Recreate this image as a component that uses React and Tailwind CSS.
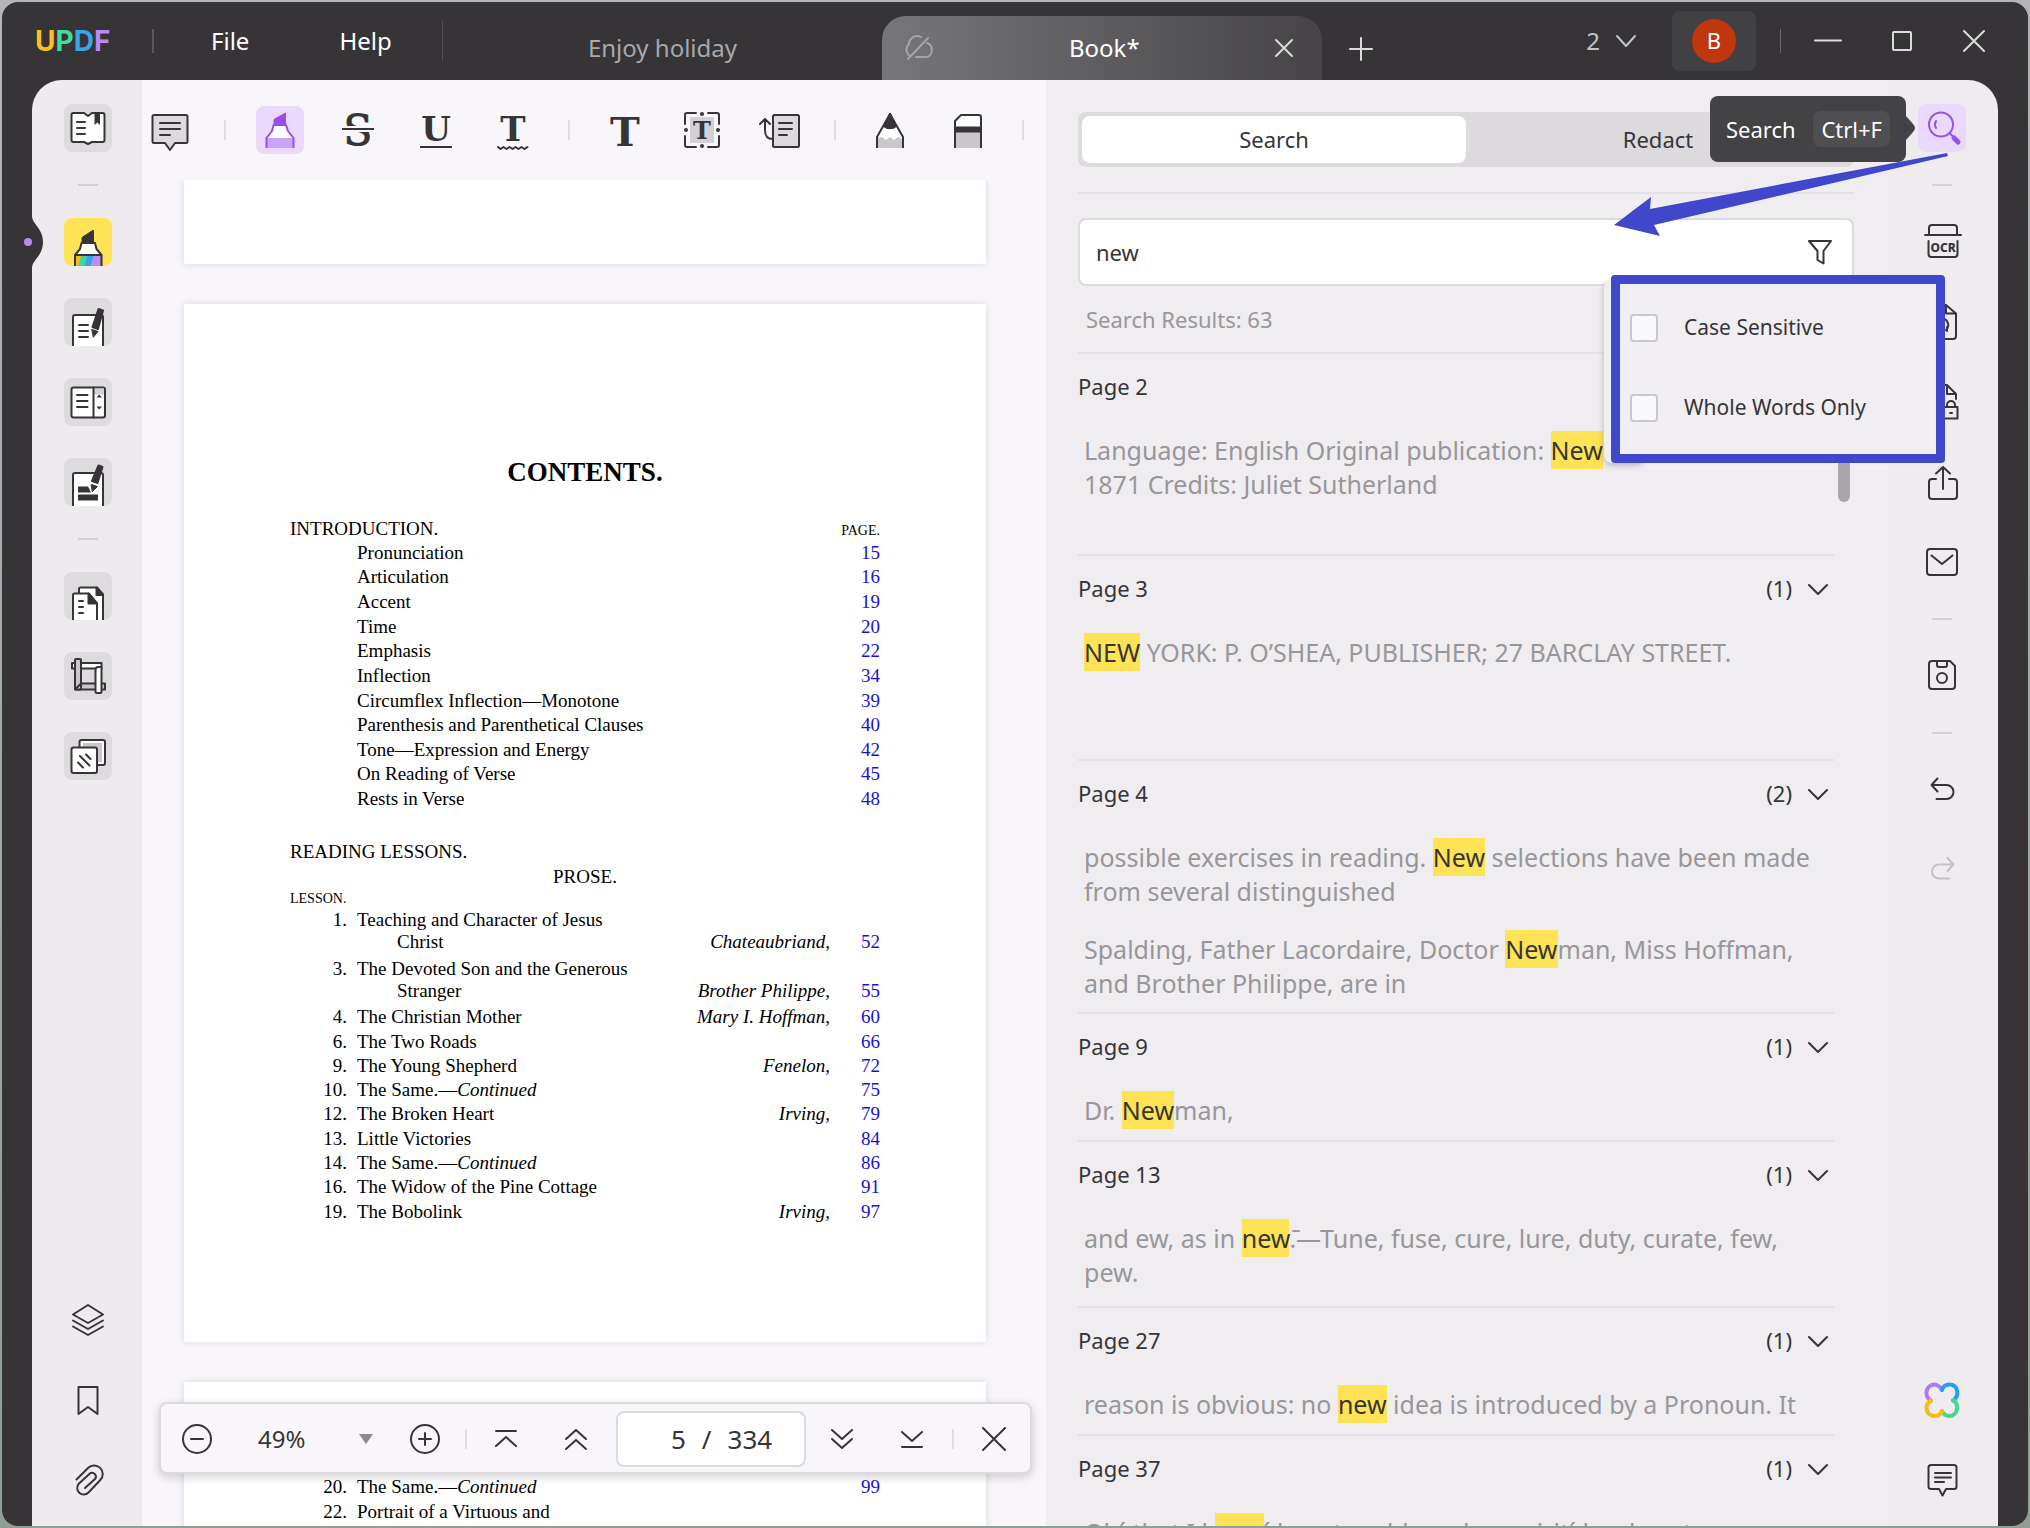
import React, { useState } from "react";

const INTRO_ROWS = [
  ["Pronunciation", 15],
  ["Articulation", 16],
  ["Accent", 19],
  ["Time", 20],
  ["Emphasis", 22],
  ["Inflection", 34],
  ["Circumflex Inflection—Monotone", 39],
  ["Parenthesis and Parenthetical Clauses", 40],
  ["Tone—Expression and Energy", 42],
  ["On Reading of Verse", 45],
  ["Rests in Verse", 48],
];

const LESSONS = [
  { no: 1, title: "Teaching and Character of Jesus", more: "Christ", author: "Chateaubriand", page: 52 },
  { no: 3, title: "The Devoted Son and the Generous", more: "Stranger", author: "Brother Philippe", page: 55 },
  { no: 4, title: "The Christian Mother", author: "Mary I. Hoffman", page: 60 },
  { no: 6, title: "The Two Roads", page: 66 },
  { no: 9, title: "The Young Shepherd", author: "Fenelon", page: 72 },
  { no: 10, title: "The Same.—", continued: true, page: 75 },
  { no: 12, title: "The Broken Heart", author: "Irving", page: 79 },
  { no: 13, title: "Little Victories", page: 84 },
  { no: 14, title: "The Same.—", continued: true, page: 86 },
  { no: 16, title: "The Widow of the Pine Cottage", page: 91 },
  { no: 19, title: "The Bobolink", author: "Irving", page: 97 },
];

const NEXT_LESSONS = [
  { no: 20, title: "The Same.—", continued: true, page: 99 },
  { no: 22, title: "Portrait of a Virtuous and" },
];

// each hit is [before, match, after, second line]
const RESULTS = [
  { page: 2, space: "pb-[53px]", hits: [["Language: English Original publication: ", "New", "", "1871 Credits: Juliet Sutherland"]] },
  { page: 3, count: 1, space: "pb-[90px]", hits: [["", "NEW", " YORK: P. O’SHEA, PUBLISHER; 27 BARCLAY STREET."]] },
  {
    page: 4,
    count: 2,
    space: "pb-3",
    hits: [
      ["possible exercises in reading. ", "New", " selections have been made", "from several distinguished"],
      ["Spalding, Father Lacordaire, Doctor ", "New", "man, Miss Hoffman,", "and Brother Philippe, are in"],
    ],
  },
  { page: 9, count: 1, space: "pb-[13px]", hits: [["Dr. ", "New", "man,"]] },
  { page: 13, count: 1, space: "pb-[17px]", hits: [["and ew, as in ", "new", ".̄—Tune, fuse, cure, lure, duty, curate, few,", "pew."]] },
  { page: 27, count: 1, space: "pb-[13px]", hits: [["reason is obvious: no ", "new", " idea is introduced by a Pronoun. It"]] },
  { page: 37, count: 1, space: "pb-[13px]", hits: [["Oh´ that I k", "new", "´ how to address her spirit´ her heart"]] },
];

function Icon({ children, className = "h-12 w-12", box = "0 0 48 48", width = 2 }) {
  return (
    <svg
      viewBox={box}
      className={`shrink-0 ${className}`}
      fill="none"
      stroke="#363437"
      strokeWidth={width}
      strokeLinecap="round"
      strokeLinejoin="round"
      aria-hidden="true"
    >
      {children}
    </svg>
  );
}

const LETTER = { fontFamily: "DejaVu Serif", fontWeight: 700, fill: "#363437", stroke: "none", textAnchor: "middle" };

const CommentIcon = ({ fill = "#dcdadd" }) => (
  <Icon>
    <path d="M8 9h32a1.5 1.5 0 0 1 1.5 1.5v25A1.5 1.5 0 0 1 40 37H29l-5 7-5-7H8a1.5 1.5 0 0 1-1.5-1.5v-25A1.5 1.5 0 0 1 8 9z" fill={fill} />
    <path d="M14 17h20M14 23h20M14 29h10" />
  </Icon>
);

const HighlighterIcon = () => (
  <Icon>
    <path d="M18 18v-4.500L29.500 7v11z" fill="#9450e6" stroke="#9450e6" strokeWidth="1" />
    <path d="M17.500 19h12.500l2 6 5.500 7H10.500l5.500-7z" fill="#fff" stroke="none" />
    <path d="M10.500 32h27v10h-27z" fill="#c9a5fa" stroke="none" />
    <path d="M10.500 42V32l5.500-7 1.500-6h12.500l2 6 5.500 7v10" stroke="#9450e6" strokeLinecap="butt" />
  </Icon>
);

const StrikeIcon = () => (
  <Icon>
    <text x="24" y="39" fontSize="42" {...LETTER} fontWeight="400" strokeWidth="1" stroke="#363437">S</text>
    <path d="M6 23h36" stroke="#f8f6fa" strokeWidth="6" strokeLinecap="butt" />
    <path d="M8 23h32" strokeLinecap="butt" />
  </Icon>
);

const UnderlineIcon = () => (
  <Icon>
    <text x="24" y="35" fontSize="34" {...LETTER}>U</text>
    <path d="M8 41h32" strokeLinecap="butt" />
  </Icon>
);

const SquigglyIcon = () => (
  <Icon>
    <text x="23" y="35" fontSize="34" {...LETTER}>T</text>
    <path d="M8 41l2.500 2 3-2 3 2 3-2 3 2 3-2 3 2 3-2 3 2 3-2" />
  </Icon>
);

const TextIcon = () => (
  <Icon>
    <text x="25" y="40" fontSize="40" {...LETTER}>T</text>
  </Icon>
);

const TextBoxIcon = () => (
  <Icon>
    <path d="M12 11h24v26H12z" fill="#d3d1d4" stroke="none" />
    <text x="24" y="33" fontSize="24" {...LETTER}>T</text>
    <path d="M18 7H9a2 2 0 0 0-2 2v9M30 7h9a2 2 0 0 1 2 2v9M18 41H9a2 2 0 0 1-2-2v-9M30 41h9a2 2 0 0 0 2-2v-9" />
    <g fill="#363437" stroke="none">
      <circle cx="24" cy="8" r="2" />
      <circle cx="24" cy="40" r="2" />
      <circle cx="8" cy="24" r="2" />
      <circle cx="40" cy="24" r="2" />
    </g>
  </Icon>
);

const CalloutIcon = () => (
  <Icon>
    <rect x="17" y="9" width="26" height="32" rx="1.500" fill="#dcdadd" />
    <path d="M23 17h13M23 23h13M23 29h8M17 33c-6 0-8-3-8-9V13M4 18l5-5 5 5" />
  </Icon>
);

const PencilIcon = () => (
  <Icon>
    <path d="M11 42V31L24 8l13 23v11" fill="#fff" stroke="none" />
    <path d="M12 42V32l4-1 4 3 4-3 4 3 4-3 4 2v9z" fill="#c9c7ca" stroke="none" />
    <path d="M11 42V31L24 8l13 23v11" strokeLinecap="butt" />
    <path d="M18 20l6-12 6 12c-3 3-9 3-12 0z" fill="#363437" />
  </Icon>
);

const EraserIcon = () => (
  <Icon>
    <path d="M11 42V15l6-6h18a2 2 0 0 1 2 2v31" fill="#fff" stroke="none" />
    <path d="M11 24h26v18H11z" fill="#c9c7ca" stroke="none" />
    <path d="M11 20.500h26v6H11z" fill="#363437" stroke="none" />
    <path d="M11 42V15l6-6h18a2 2 0 0 1 2 2v31" strokeLinecap="butt" />
  </Icon>
);

const ReaderIcon = () => (
  <Icon>
    <path d="M9.500 9H20l4 3 4-3h10.500A2 2 0 0 1 40.500 11v25a2 2 0 0 1-2 2H28l-4 2-4-2H9.500a2 2 0 0 1-2-2V11a2 2 0 0 1 2-2z" fill="#fff" />
    <path d="M30.500 9H36v12l-2.700-2.500L30.500 21z" fill="#363437" stroke="none" />
    <path d="M13 18h8M13 24h8M13 30h8" />
  </Icon>
);

const MarkerIcon = () => (
  <Icon>
    <path d="M18 24v-4.500L28.500 12.500h1V24z" fill="#363437" strokeWidth="1" />
    <path d="M17.500 25h13.500l1.500 5 5 7H11l5-7z" fill="#fff" stroke="none" />
    <path d="M11 38h6l-3 10h-3z" fill="#f9b916" stroke="none" />
    <path d="M17 38h6l-3 10h-6z" fill="#3fd797" stroke="none" />
    <path d="M23 38h7l-3 10h-7z" fill="#36a3ea" stroke="none" />
    <path d="M30 38h7.500v10H27z" fill="#bb8bf6" stroke="none" />
    <path d="M11 48V37l5-6 1.500-6H31l1.500 6 5 6v11M11 37h26.500" strokeLinecap="butt" />
  </Icon>
);

const EditIcon = () => (
  <Icon>
    <path d="M9 48V19a2 2 0 0 1 2-2h26a2 2 0 0 1 2 2v29" fill="#fff" strokeLinecap="butt" />
    <path d="M15 27h9M15 33h9M15 39h9" />
    <path d="M34.500 11l4.500 1.500L34 31l-5.500-2z" fill="#363437" />
    <path d="M28 31.500l6 2-4.500 5.500z" fill="#363437" strokeWidth="1" />
  </Icon>
);

const FormIcon = () => (
  <Icon>
    <rect x="7.500" y="9.500" width="33.500" height="30" rx="2" fill="#fff" />
    <path d="M30 10.500h10v6H30z" fill="#d3d1d4" stroke="none" />
    <path d="M29.500 9.500v30M13 17h10.500M13 23h10.500M13 29h10.500" />
    <path d="M32.500 19.500l2.700-3 2.700 3zM32.500 28.500l2.700 3 2.700-3z" fill="#363437" stroke="none" />
  </Icon>
);

const RedactIcon = () => (
  <Icon>
    <path d="M9 48V17a2 2 0 0 1 2-2h26a2 2 0 0 1 2 2v31" fill="#fff" strokeLinecap="butt" />
    <path d="M14 28.500h10l3 6H14zM14 36.500h20v6H14z" fill="#363437" stroke="none" />
    <path d="M34.500 7.500l4 1.500-5 16-5.500-2z" fill="#363437" />
    <path d="M27.500 26.500l6 2-5 5z" fill="#363437" strokeWidth="1" />
  </Icon>
);

const PagesIcon = () => (
  <Icon>
    <path d="M15 48V17a1.500 1.500 0 0 1 1.500-1.500H33l6 7V48" fill="#fff" strokeLinecap="butt" />
    <path d="M32.500 15.500L39 23h-6.500z" fill="#363437" />
    <path d="M9 48V23a1.500 1.500 0 0 1 1.500-1.500H25l8 10V48" fill="#fff" strokeLinecap="butt" />
    <path d="M24.500 21.500l8.500 10h-8.500z" fill="#363437" />
    <path d="M15 29h4M15 35h4M15 41h4" />
  </Icon>
);

const CropIcon = () => (
  <Icon>
    <path d="M8 11h29.500v5.500H8z" fill="#fff" />
    <path d="M11 31.500h30v6H11z" fill="#c9c7ca" />
    <rect x="11" y="7" width="6" height="30.500" rx="1" fill="#c9c7ca" />
    <path d="M31.500 18a3 3 0 0 1 3-3h3V40a1 1 0 0 1-1 1h-4a1 1 0 0 1-1-1z" fill="#fff" />
    <path d="M12 36.500l5-5" />
  </Icon>
);

const BatchIcon = () => (
  <Icon>
    <rect x="15.500" y="8" width="25.500" height="25" rx="2" fill="#fff" />
    <path d="M19 11h19v19h-4V16H19z" fill="#c9c7ca" stroke="none" />
    <rect x="7.500" y="15.500" width="25.500" height="25.500" rx="2" fill="#fff" />
    <path d="M14 30.500l5 5M16 24l9.500 9.500M22 22.500l4.500 4.500" />
  </Icon>
);

const LayersIcon = () => (
  <Icon>
    <path d="M24 9l15 9.500-15 8.500-15-8.500zM9 24.500L24 33l15-8.500M9 30.500L24 39l15-8.500" />
  </Icon>
);

const BookmarkIcon = () => (
  <Icon>
    <path d="M14.500 11h19v27L24 31l-9.500 7z" />
  </Icon>
);

const ClipIcon = () => (
  <Icon>
    <path d="M12.500 23.500L24 12a8.300 8.300 0 0 1 12.300 12L24.500 36.500a6.500 6.500 0 0 1-9.500-9L26.500 17a4 4 0 0 1 5 5.500L21 32" />
  </Icon>
);

const SearchIcon = () => (
  <Icon>
    <g stroke="#9652e8">
      <circle cx="23" cy="20.500" r="12" />
      <path d="M18 17a7 7 0 0 0 0 7M32 29.500l3 3" />
      <path d="M36 34l4 4" strokeWidth="5" />
    </g>
  </Icon>
);

const OcrIcon = () => (
  <Icon>
    <path d="M11 17V10a3 3 0 0 1 3-3h22a3 3 0 0 1 3 3v7M7 17h36M10.500 23v13a3 3 0 0 0 3 3h23a3 3 0 0 0 3-3V23" />
    <text x="25" y="34" fontSize="12" fontWeight="800" fontFamily="Noto Sans" textAnchor="middle" fill="#363437" stroke="none">OCR</text>
  </Icon>
);

const ConvertIcon = () => (
  <Icon>
    <path d="M28 7H13a3 3 0 0 0-3 3v28a3 3 0 0 0 3 3h22a3 3 0 0 0 3-3V15.500zM28 7v8.500h10" />
    <path d="M19 27a5.500 5.500 0 0 1 10.500-3c1.500 3 .5 6-1.500 8M29 33v-4" />
  </Icon>
);

const ProtectIcon = () => (
  <Icon>
    <path d="M22 41h-9a3 3 0 0 1-3-3V10a3 3 0 0 1 3-3h16l9 9v5M29 7v9h9" />
    <path d="M28 29h11.500v11.500H26V29zM29 29v-2a4 4 0 0 1 8 0v2M32 35h2" />
  </Icon>
);

const ShareIcon = () => (
  <Icon>
    <path d="M18 21h-4a3 3 0 0 0-3 3v14a3 3 0 0 0 3 3h22a3 3 0 0 0 3-3V24a3 3 0 0 0-3-3h-5M25 31V9M18 15.500L25 9l7 6.500" />
  </Icon>
);

const MailIcon = () => (
  <Icon>
    <rect x="9" y="11" width="30" height="26" rx="3" />
    <path d="M13.500 17.500L24 26l10.500-8.500" />
  </Icon>
);

const SaveIcon = () => (
  <Icon>
    <path d="M14 9h18l5 5v20a3 3 0 0 1-3 3H14a3 3 0 0 1-3-3V12a3 3 0 0 1 3-3zM19 9v4a2 2 0 0 0 2 2h6a2 2 0 0 0 2-2V9" />
    <circle cx="24" cy="26" r="5" />
  </Icon>
);

const UndoIcon = () => (
  <Icon>
    <path d="M13.500 19H28.500a7 7 0 0 1 0 14H18.500M19.500 12.500l-6 6.500 6 6.500" />
  </Icon>
);

const RedoIcon = () => (
  <Icon>
    <path d="M35.500 18.500H21a7 7 0 0 0 0 14h10M29.500 12l6 6.500-6 6.500" stroke="#c3c1c4" />
  </Icon>
);

const AssistantIcon = () => (
  <Icon width={4}>
    <path d="M13 24.500a8.500 8.500 0 0 1 3-16c4 0 6 2 8 5.500" stroke="#ab7bef" />
    <path d="M24 14c1-3.500 4-5.500 7.500-5.500 8 0 11 11 3.500 16" stroke="#249ff0" />
    <path d="M35 24c7.500 5 4 16-3.500 16-3 0-6-1.500-7.500-5" stroke="#46d796" />
    <path d="M13 24.500c-8 5-4 15.500 3 15.500 4 0 7-2 8-5" stroke="#fab913" />
  </Icon>
);

const NotesIcon = () => (
  <Icon>
    <path d="M13 9h23a2.500 2.500 0 0 1 2.500 2.500v19A2.500 2.500 0 0 1 36 33h-8l-3.500 6.500L21 33h-8a2.500 2.500 0 0 1-2.500-2.500v-19A2.500 2.500 0 0 1 13 9z" />
    <path d="M17 17h16M17 21.500h16M17 26h9" />
  </Icon>
);

function RailButton({ label, children, tone = "" }) {
  return (
    <button type="button" aria-label={label} className={`h-12 w-12 shrink-0 rounded-lg ${tone}`}>
      {children}
    </button>
  );
}

const RailRule = () => <hr className="h-[2px] w-5 shrink-0 border-0 bg-[#d3d1d4]" />;
const ToolRule = () => <span className="h-5 w-[2px] shrink-0 bg-[#dedce0]" />;

function TitleBar() {
  return (
    <header className="flex h-[78px] shrink-0 items-center text-2xl text-white">
      <div className="ml-[33px] w-20 shrink-0 font-[Inter] text-[28px] leading-8 font-bold">
        <span className="text-[#fbc11a]">U</span>
        <span className="text-[#43dc9c]">P</span>
        <span className="text-[#3aa5ea]">D</span>
        <span className="text-[#b98af6]">F</span>
      </div>
      <span className="ml-[37px] h-6 w-[2px] bg-[#5a585b]" />
      <nav className="flex">
        <button type="button" className="ml-[57px]">File</button>
        <button type="button" className="ml-[90px]">Help</button>
      </nav>
      <span className="ml-[50px] h-10 w-px bg-[#504e51]" />
      <button type="button" className="min-w-0 flex-1 pt-[14px] text-center text-[#a9a8aa]">Enjoy holiday</button>
      <div className="flex h-16 w-[440px] items-center self-end rounded-t-3xl bg-linear-to-r from-[#777678] to-[#464446] pr-7 pl-5">
        <Icon className="h-8 w-8" box="0 0 32 32">
          <g stroke="#a5a4a6">
            <path d="M8 24a7.500 7.500 0 0 1-1-12C7 6 14 2 19 5M25 11c7 2 6 14-1 14H14M26 6L6 27" />
          </g>
        </Icon>
        <span className="flex-1 text-center">Book*</span>
        <button type="button" aria-label="Close tab">
          <Icon className="h-5 w-5" box="0 0 20 20">
            <path d="M2 2l16 16M18 2L2 18" stroke="#dcdbdc" />
          </Icon>
        </button>
      </div>
      <button type="button" aria-label="New tab" className="mt-4 ml-[27px]">
        <Icon className="h-6 w-6" box="0 0 24 24">
          <path d="M12 1v22M1 12h22" stroke="#dcdbdc" />
        </Icon>
      </button>
      <button type="button" className="ml-[213px] flex items-center gap-4 text-[#c4c3c5]">
        2
        <Icon className="h-5 w-5" box="0 0 20 20">
          <path d="M1 5l9 10 9-10" stroke="#c4c3c5" />
        </Icon>
      </button>
      <div className="ml-9 flex h-[60px] w-[84px] items-center justify-center rounded-lg bg-[#414042]">
        <span className="flex h-11 w-11 items-center justify-center rounded-full bg-[#c1370d] text-[22px]">B</span>
      </div>
      <span className="ml-6 h-6 w-px bg-[#6a686b]" />
      <div className="mr-[42px] ml-[33px] flex items-center gap-12">
        <button type="button" aria-label="Minimize">
          <Icon className="h-7 w-7" box="0 0 28 28">
            <path d="M1 13.500h26" stroke="#dcdbdc" />
          </Icon>
        </button>
        <button type="button" aria-label="Maximize">
          <Icon className="h-6 w-6" box="0 0 24 24">
            <rect x="3" y="3" width="18" height="18" rx="1" stroke="#dcdbdc" />
          </Icon>
        </button>
        <button type="button" aria-label="Close window">
          <Icon className="h-6 w-6" box="0 0 24 24">
            <path d="M2 2l20 20M22 2L2 22" stroke="#dcdbdc" />
          </Icon>
        </button>
      </div>
    </header>
  );
}

function LeftRail() {
  return (
    <aside className="relative flex flex-col items-center gap-8 rounded-tl-[30px] bg-[#edebee] pt-6 pb-[22px] pl-[2px]">
      <svg viewBox="0 0 20 56" className="absolute top-[134px] -left-2 h-14 w-5" aria-hidden="true">
        <path d="M8 2c0 8 11 12 11 26S8 46 8 54z" fill="#363437" />
        <circle cx="4" cy="28" r="4" fill="#b98af6" />
      </svg>
      <RailButton label="Reader" tone="bg-[#dddbde]"><ReaderIcon /></RailButton>
      <RailRule />
      <RailButton label="Comment" tone="bg-[#fde355]"><MarkerIcon /></RailButton>
      <RailButton label="Edit PDF" tone="bg-[#dddbde]"><EditIcon /></RailButton>
      <RailButton label="Prepare form" tone="bg-[#dddbde]"><FormIcon /></RailButton>
      <RailButton label="Redact" tone="bg-[#dddbde]"><RedactIcon /></RailButton>
      <RailRule />
      <RailButton label="Organize pages" tone="bg-[#dddbde]"><PagesIcon /></RailButton>
      <RailButton label="Crop pages" tone="bg-[#dddbde]"><CropIcon /></RailButton>
      <RailButton label="Batch" tone="bg-[#dddbde]"><BatchIcon /></RailButton>
      <div className="mt-auto flex flex-col gap-8">
        <RailButton label="Layers"><LayersIcon /></RailButton>
        <RailButton label="Bookmarks"><BookmarkIcon /></RailButton>
        <RailButton label="Attachments"><ClipIcon /></RailButton>
      </div>
    </aside>
  );
}

function Toolbar() {
  return (
    <div className="flex h-[100px] shrink-0 items-center gap-[30px] pl-1">
      <RailButton label="Note"><CommentIcon /></RailButton>
      <ToolRule />
      <RailButton label="Highlight" tone="bg-[#ead9fd]"><HighlighterIcon /></RailButton>
      <RailButton label="Strikethrough"><StrikeIcon /></RailButton>
      <RailButton label="Underline"><UnderlineIcon /></RailButton>
      <RailButton label="Squiggly line"><SquigglyIcon /></RailButton>
      <ToolRule />
      <RailButton label="Text comment"><TextIcon /></RailButton>
      <RailButton label="Text box"><TextBoxIcon /></RailButton>
      <RailButton label="Text callout"><CalloutIcon /></RailButton>
      <ToolRule />
      <RailButton label="Pencil"><PencilIcon /></RailButton>
      <RailButton label="Eraser"><EraserIcon /></RailButton>
      <ToolRule />
    </div>
  );
}

function LessonRow({ no, title, more, continued, author, page }) {
  // author and page sit on the last line of a wrapped title
  const lastLine = more ? "pt-[22px]" : "";
  return (
    <tr className="align-top leading-[22px]">
      <td className="w-[57px] text-right">{no}.</td>
      <td className="pl-[10px]">
        {title}
        {continued && <i>Continued</i>}
        {more && <span className="block pl-10">{more}</span>}
      </td>
      <td className={`text-right ${lastLine}`}>{author && <><i>{author}</i>,</>}</td>
      <td className={`w-[50px] text-right text-[#1a10d8] ${lastLine}`}>{page && <a href={`#p${page}`}>{page}</a>}</td>
    </tr>
  );
}

function Document() {
  return (
    <div className="flex min-h-0 flex-1 flex-col gap-10 overflow-hidden pr-[60px] pl-[42px] font-['Liberation_Serif',serif] text-[19px] leading-[23px] text-black">
      <div className="h-[84px] shrink-0 bg-white shadow-[0_0_8px_rgba(0,0,0,0.12)]" />
      <article className="h-[1038px] shrink-0 bg-white px-[106px] pt-[150px] shadow-[0_0_8px_rgba(0,0,0,0.12)]">
        <h1 className="text-center text-[27px] leading-9 font-bold">CONTENTS.</h1>
        <table className="mt-[27px] h-[294px] w-full">
          <thead>
            <tr>
              <th className="text-left font-normal">INTRODUCTION.</th>
              <th className="text-right align-bottom text-sm leading-[18px] font-normal">PAGE.</th>
            </tr>
          </thead>
          <tbody>
            {INTRO_ROWS.map(([title, page]) => (
              <tr key={page}>
                <td className="pl-[67px]">{title}</td>
                <td className="text-right text-[#1a10d8]"><a href={`#p${page}`}>{page}</a></td>
              </tr>
            ))}
          </tbody>
        </table>
        <h2 className="mt-[29px] leading-6">READING LESSONS.</h2>
        <p className="text-center leading-[25px]">PROSE.</p>
        <p className="text-sm leading-5">LESSON.</p>
        <table className="h-[316px] w-full">
          <tbody>
            {LESSONS.map((row) => <LessonRow key={row.no} {...row} />)}
          </tbody>
        </table>
      </article>
      <article className="shrink-0 bg-white px-[106px] pt-[94px] pb-10 shadow-[0_0_8px_rgba(0,0,0,0.12)]">
        <table className="h-[50px] w-full">
          <tbody>
            {NEXT_LESSONS.map((row) => <LessonRow key={row.no} {...row} />)}
          </tbody>
        </table>
      </article>
    </div>
  );
}

function PageBar() {
  return (
    <div className="absolute right-[14px] bottom-[52px] left-[17px] flex h-[72px] items-center rounded-lg border-2 border-[#dcdadd] bg-[#f8f6fa] pt-[2px] pl-5 text-2xl shadow-[0_3px_10px_rgba(0,0,0,0.18)]">
      <button type="button" aria-label="Zoom out">
        <Icon className="h-8 w-8" box="0 0 32 32">
          <circle cx="16" cy="16" r="14" />
          <path d="M10 16h12" />
        </Icon>
      </button>
      <label className="ml-[45px] flex items-center">
        <select aria-label="Zoom" className="w-[116px] appearance-none bg-transparent" defaultValue="49%">
          <option>49%</option>
          <option>100%</option>
        </select>
        <svg viewBox="0 0 14 10" className="pointer-events-none -ml-[15px] h-[10px] w-[14px]" aria-hidden="true">
          <path d="M0 0h14L7 10z" fill="#8b898c" />
        </svg>
      </label>
      <button type="button" aria-label="Zoom in" className="ml-9">
        <Icon className="h-8 w-8" box="0 0 32 32">
          <circle cx="16" cy="16" r="14" />
          <path d="M10 16h12M16 10v12" />
        </Icon>
      </button>
      <span className="ml-6 h-5 w-[2px] bg-[#dedce0]" />
      <button type="button" aria-label="First page" className="ml-[27px]">
        <Icon className="h-6 w-6" box="0 0 24 24"><path d="M2 4h20M2 19l10-9 10 9" /></Icon>
      </button>
      <button type="button" aria-label="Previous page" className="ml-[46px]">
        <Icon className="h-6 w-6" box="0 0 24 24"><path d="M2 12l10-9 10 9M2 22l10-9 10 9" /></Icon>
      </button>
      <div className="ml-7 flex h-14 w-[190px] shrink-0 items-center justify-center gap-4 rounded-lg border-2 border-[#dcdadd] bg-white pr-1 text-[26px]">
        <input aria-label="Page number" defaultValue="5" className="w-10 bg-transparent text-right outline-none" />
        <span>/</span>
        <span>334</span>
      </div>
      <button type="button" aria-label="Next page" className="ml-6">
        <Icon className="h-6 w-6" box="0 0 24 24"><path d="M2 3l10 9 10-9M2 12l10 9 10-9" /></Icon>
      </button>
      <button type="button" aria-label="Last page" className="ml-[46px]">
        <Icon className="h-6 w-6" box="0 0 24 24"><path d="M2 5l10 9 10-9M2 20h20" /></Icon>
      </button>
      <span className="ml-7 h-5 w-[2px] bg-[#dedce0]" />
      <button type="button" aria-label="Close bar" className="ml-7">
        <Icon className="h-6 w-6" box="0 0 24 24"><path d="M1 1l22 22M23 1L1 23" /></Icon>
      </button>
    </div>
  );
}

function Result({ page, count, space, hits }) {
  return (
    <section className={`border-t-2 border-[#e3e1e4] ${space}`}>
      <header className="flex h-16 items-center text-[22px]">
        <h3 className="flex-1">Page {page}</h3>
        {count && (
          <button type="button" className="mr-[6px] flex items-center gap-4">
            ({count})
            <Icon className="h-5 w-5" box="0 0 20 20"><path d="M1 7l9 9 9-9" /></Icon>
          </button>
        )}
      </header>
      <div className="mt-[15px] flex flex-col gap-6 pl-[6px] text-[25px] leading-[34px] whitespace-pre text-[#98969a]">
        {hits.map(([before, match, after, second]) => (
          <p key={before}>
            {before}
            <mark className="bg-[#fde355] py-[2px] text-[#363437]">{match}</mark>
            {after}
            {second && <span className="block">{second}</span>}
          </p>
        ))}
      </div>
    </section>
  );
}

function FilterMenu() {
  const [checked, setChecked] = useState({});
  return (
    <div className="absolute top-[200px] right-[-55px] w-[334px]">
      <div className="absolute inset-y-0 -left-[7px] w-10 rounded-lg bg-[#f0eef1] shadow-[0_2px_6px_rgba(0,0,0,0.25)]" />
      <fieldset className="relative -mt-[5px] rounded border-9 border-[#4147cb] bg-[#f0eef1] pt-1 pb-[6px]">
        {["Case Sensitive", "Whole Words Only"].map((name) => (
          <label key={name} className="flex h-20 items-center gap-[26px] pl-[10px] text-[21px]">
            <input
              type="checkbox"
              checked={!!checked[name]}
              onChange={(e) => setChecked({ ...checked, [name]: e.target.checked })}
              className="h-7 w-7 appearance-none rounded border-2 border-[#c9c7ca] bg-[#f9f8fa] checked:bg-[#9652e8]"
            />
            {name}
          </label>
        ))}
      </fieldset>
    </div>
  );
}

function SearchPanel() {
  const [query, setQuery] = useState("new");
  return (
    <section className="relative z-10 flex min-h-0 min-w-0 flex-col bg-[#efedf0] pr-9 pl-8 text-[22px]">
      <div role="tablist" className="mt-8 grid h-[55px] shrink-0 grid-cols-2 rounded-lg bg-[#dcdadd] p-1">
        <button type="button" role="tab" aria-selected="true" className="rounded-lg bg-white">Search</button>
        <button type="button" role="tab" aria-selected="false">Redact</button>
      </div>
      <hr className="mt-[25px] shrink-0 border-t-2 border-[#e3e1e4]" />
      <div className="mt-6 flex h-[68px] shrink-0 items-center rounded-lg border-2 border-[#dcdadd] bg-white pr-[18px] pl-4">
        <input
          aria-label="Search text"
          value={query}
          onChange={(e) => setQuery(e.target.value)}
          className="min-w-0 flex-1 outline-none"
        />
        <button type="button" aria-label="Search filter">
          <Icon className="h-7 w-7" box="0 0 28 28">
            <path d="M3 3h22L17.500 13v12.500L11.500 22v-9z" />
          </Icon>
        </button>
      </div>
      <p className="mt-[17px] mb-[17px] pl-2 leading-8 text-[#98969a]">Search Results: 63</p>
      <div className="relative min-h-0 flex-1 overflow-hidden pr-5">
        {RESULTS.map((result) => <Result key={result.page} {...result} />)}
        <div className="absolute top-0 right-1 h-[150px] w-3 rounded-full bg-[#a8a6a9]" />
      </div>
      <FilterMenu />
    </section>
  );
}

function RightRail() {
  return (
    <aside className="relative flex flex-col items-center gap-8 rounded-tr-[30px] bg-[#eeecef] pt-6 pr-1 pb-[22px]">
      <RailButton label="Search" tone="bg-[#ead9fd]"><SearchIcon /></RailButton>
      <RailRule />
      <RailButton label="OCR"><OcrIcon /></RailButton>
      <RailButton label="Convert"><ConvertIcon /></RailButton>
      <RailButton label="Protect"><ProtectIcon /></RailButton>
      <RailButton label="Share"><ShareIcon /></RailButton>
      <RailButton label="Email"><MailIcon /></RailButton>
      <RailRule />
      <RailButton label="Save"><SaveIcon /></RailButton>
      <RailRule />
      <RailButton label="Undo"><UndoIcon /></RailButton>
      <RailButton label="Redo"><RedoIcon /></RailButton>
      <div className="mt-auto flex flex-col gap-8">
        <RailButton label="AI assistant"><AssistantIcon /></RailButton>
        <RailButton label="Comments"><NotesIcon /></RailButton>
      </div>
      <div role="tooltip" className="absolute top-4 right-[92px] z-20 flex h-[66px] w-[196px] items-center justify-between rounded-lg bg-[#434244] px-4 text-[22px] text-white">
        Search
        <kbd className="rounded-lg bg-[#4f4e50] px-2 font-[inherit] leading-9">Ctrl+F</kbd>
        <svg viewBox="0 0 10 24" className="absolute top-5 left-full h-6 w-[10px]" aria-hidden="true">
          <path d="M0 0l7 8q4 4 0 8l-7 8z" fill="#434244" />
        </svg>
      </div>
      <svg viewBox="0 0 336 86" className="absolute top-[71px] right-12 z-20 h-[86px] w-[336px]" fill="#4147cb" aria-hidden="true">
        <path d="M0 74L37 46l-1 12L333 2l1 3L40 74l6 11z" />
      </svg>
    </aside>
  );
}

export default function App() {
  return (
    <div className="h-screen bg-linear-to-b from-[#b4b5b6] to-[#8f9f95] p-[2px] font-['Noto_Sans',sans-serif] text-[#363437]">
      <div className="flex h-full flex-col overflow-hidden rounded-2xl bg-[#363437]">
        <TitleBar />
        <div className="mx-[30px] grid min-h-0 flex-1 grid-cols-[110px_minmax(0,904fr)_minmax(0,844fr)_108px] grid-rows-[minmax(0,1fr)]">
          <LeftRail />
          <main className="relative flex min-h-0 min-w-0 flex-col bg-[#f8f6fa]">
            <Toolbar />
            <Document />
            <PageBar />
          </main>
          <SearchPanel />
          <RightRail />
        </div>
      </div>
    </div>
  );
}
